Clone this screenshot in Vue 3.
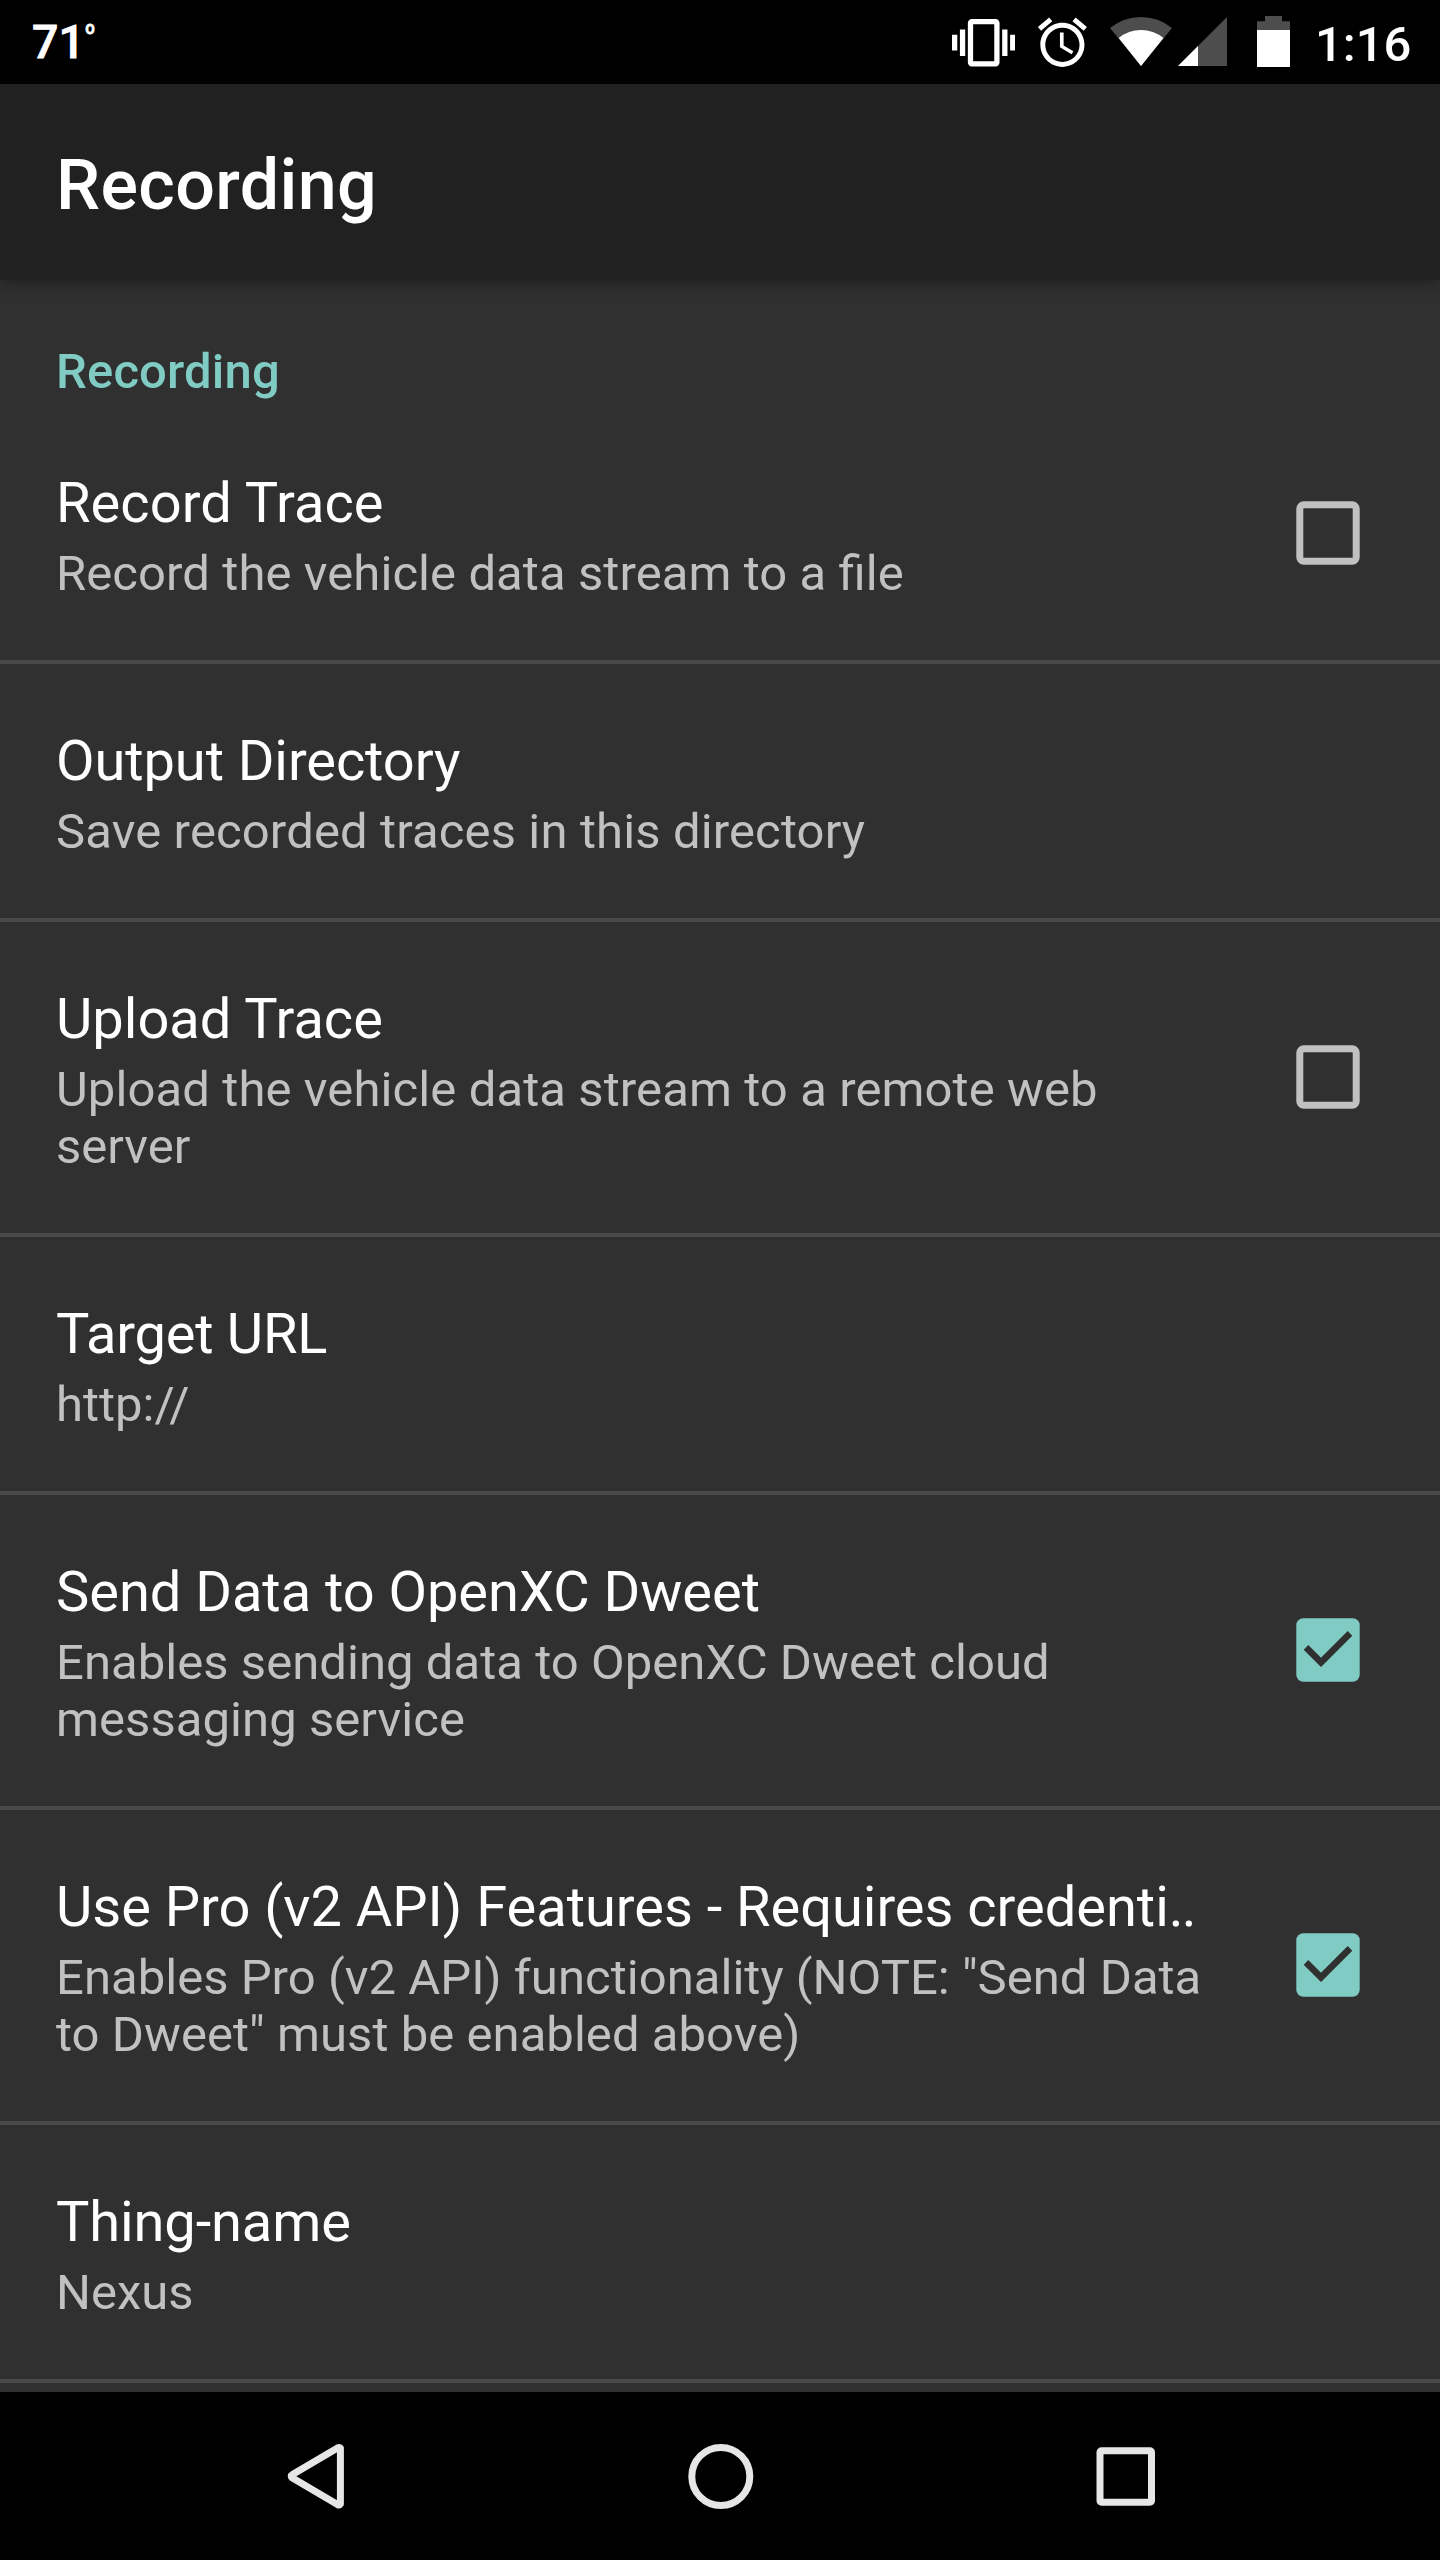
<script setup>
// `track` values are letter spacing in px, for the title and for each summary line
const settings = [
  { title: 'Record Trace', track: 0.05, summary: [{ text: 'Record the vehicle data stream to a file', track: 0.08 }], checked: false },
  { title: 'Output Directory', track: -0.08, summary: [{ text: 'Save recorded traces in this directory', track: 0.13 }] },
  { title: 'Upload Trace', track: 0, summary: [{ text: 'Upload the vehicle data stream to a remote web', track: 0.1 }, { text: 'server', track: 0 }], checked: false },
  { title: 'Target URL', track: -0.25, summary: [{ text: 'http://', track: 0 }] },
  { title: 'Send Data to OpenXC Dweet', track: -0.03, summary: [{ text: 'Enables sending data to OpenXC Dweet cloud', track: 0.05 }, { text: 'messaging service', track: 0.06 }], checked: true },
  { title: 'Use Pro (v2 API) Features - Requires credenti', dots: '..', track: -0.02, summary: [{ text: 'Enables Pro (v2 API) functionality (NOTE: "Send Data', track: 0.03 }, { text: 'to Dweet" must be enabled above)', track: 0.05 }], checked: true },
  { title: 'Thing-name', track: -0.12, summary: [{ text: 'Nexus', track: 0 }] },
]
</script>

<template>
  <div class="screen">
    <header class="status">
      <div class="temp">71<span class="degree">º</span></div>
      <div class="tray">
        <svg class="vibrate" viewBox="0 0 24 24" fill="#fff">
          <path d="M0 15h2V9H0v6zm3 2h2V7H3v10zm19-8v6h2V9h-2zm-3 8h2V7h-2v10zM16.5 3h-9C6.67 3 6 3.67 6 4.5v15c0 .83.67 1.5 1.5 1.5h9c.83 0 1.5-.67 1.5-1.5v-15c0-.83-.67-1.5-1.5-1.5zM16 19H8V5h8v14z" />
        </svg>
        <svg class="alarm" viewBox="0 0 24 24" fill="#fff">
          <path d="M22 5.72l-4.6-3.86-1.29 1.53 4.6 3.86L22 5.72zM7.88 3.39L6.6 1.86 2 5.71l1.29 1.53 4.59-3.85zM12.5 8H11v6l4.75 2.85.75-1.23-4-2.37V8zM12 4c-4.97 0-9 4.03-9 9s4.02 9 9 9c4.97 0 9-4.03 9-9s-4.03-9-9-9zm0 16c-3.87 0-7-3.13-7-7s3.13-7 7-7 7 3.13 7 7-3.13 7-7 7z" />
        </svg>
        <svg class="wifi" viewBox="0 0 62 49">
          <path d="M31 49L0 11Q14 0 31 0T62 11Z" fill="#4d4d4d" />
          <path d="M31 49L8.700 21Q18.500 13 31 13T53.500 21Z" fill="#fff" />
        </svg>
        <svg class="signal" viewBox="0 0 49 49">
          <path d="M0 49L49 0V49Z" fill="#4d4d4d" />
          <path d="M0 49L20 29V49Z" fill="#fff" />
        </svg>
        <svg class="battery" viewBox="0 0 33 51">
          <path d="M0 5.300H8V0H25V5.300H33V14H0Z" fill="#4d4d4d" />
          <path d="M0 14H33V51H0Z" fill="#fff" />
        </svg>
        <span class="clock">1:16</span>
      </div>
    </header>

    <div class="appbar"><h1>Recording</h1></div>

    <main class="list">
      <h2>Recording</h2>
      <section v-for="item in settings" :key="item.title" class="row">
        <div class="copy">
          <div class="title" :style="{ letterSpacing: item.track + 'px' }">{{ item.title }}<span v-if="item.dots" class="dots">{{ item.dots }}</span></div>
          <div v-for="line in item.summary" :key="line.text" class="summary" :style="{ letterSpacing: line.track + 'px' }">{{ line.text }}</div>
        </div>
        <svg v-if="item.checked !== undefined" class="check" viewBox="0 0 64 64">
          <template v-if="item.checked">
            <rect x=".3" y=".3" width="63.400" height="63.400" rx="7" fill="#80cbc4" />
            <path d="M7.700 31.700L12.300 27L25 39.700L51.700 13L56.300 17.700L25 49Z" fill="#303030" />
          </template>
          <rect v-else x="3.800" y="3.800" width="56.400" height="56.400" rx="4" fill="none" stroke="#c1c1c1" stroke-width="7" />
        </svg>
      </section>
    </main>

    <nav class="nav">
      <svg viewBox="0 0 66 66" fill="none" stroke="#e6e6e6" stroke-width="7" stroke-linejoin="round">
        <path d="M57.400 5L57.400 61Q56.500 62.500 54.500 61.500L9.500 35Q7 33 9.500 31.500L54.500 5Q56.500 4 57.400 5Z" />
      </svg>
      <svg viewBox="0 0 66 66" fill="none" stroke="#e6e6e6" stroke-width="7">
        <circle cx="32.800" cy="33.400" r="29" />
      </svg>
      <svg viewBox="0 0 66 66" fill="none" stroke="#e6e6e6" stroke-width="7">
        <rect x="7" y="7.800" width="51.500" height="51.500" rx="1.500" />
      </svg>
    </nav>
  </div>
</template>

<style>
body {
  margin: 0;
  background: #000;
}
</style>

<style scoped>
.screen {
  width: 1440px;
  height: 2560px;
  display: flex;
  flex-direction: column;
  overflow: hidden;
  background: #303030;
  color: #fff;
  font-family: Roboto, "Noto Sans", sans-serif;
}
.status {
  height: 84px;
  flex: none;
  box-sizing: border-box;
  padding: 0 29px 0 32px;
  display: flex;
  justify-content: space-between;
  background: #000;
  font-weight: 500;
  white-space: nowrap;
}
.temp {
  display: flex;
  font-size: 46.500px;
  line-height: 84px;
  -webkit-text-stroke: 0.8px #fff;
}
.degree {
  margin: 18px 0 0 -1px;
  font-size: 27px;
  line-height: 32px;
  transform: scaleX(0.9);
}
.tray {
  display: flex;
  align-items: flex-start;
}
.tray svg {
  flex: none;
}
.vibrate {
  width: 63.400px;
  height: 63.400px;
  margin-top: 11.200px;
}
.alarm {
  width: 58.800px;
  height: 58.800px;
  margin: 13px 0 0 17.500px;
}
.wifi {
  width: 62px;
  height: 49px;
  margin: 17px 0 0 18.500px;
}
.signal {
  width: 49px;
  height: 49px;
  margin: 17px 0 0 6px;
}
.battery {
  width: 33px;
  height: 51px;
  margin: 16px 0 0 30px;
}
.clock {
  width: 96px;
  margin-left: 25px;
  font-size: 49px;
  line-height: 89px;
}
.appbar {
  position: relative;
  z-index: 1;
  height: 196px;
  flex: none;
  box-sizing: border-box;
  padding-left: 56px;
  background: #212121;
  box-shadow: 0 4px 14px rgba(0, 0, 0, 0.32);
}
h1 {
  margin: 0;
  font-size: 70px;
  line-height: 202px;
  font-weight: 500;
  letter-spacing: 0.35px;
}
.list {
  height: 2112px;
  flex: none;
  overflow: hidden;
}
h2 {
  margin: 0;
  height: 126px;
  padding-left: 56px;
  font-size: 49px;
  line-height: 183px;
  font-weight: 500;
  letter-spacing: 0.15px;
  color: #80cbc4;
}
.row {
  box-sizing: border-box;
  padding: 64px 80px 58px 56px;
  display: flex;
  align-items: center;
  justify-content: space-between;
  border-bottom: 4px solid #4a4a4a;
}
.copy {
  white-space: nowrap;
  font-feature-settings: "liga" 1;
}
.title {
  height: 75px;
  font-size: 56px;
  line-height: 66px;
}
.dots {
  letter-spacing: -1.700px;
}
.summary {
  height: 57px;
  font-size: 49px;
  line-height: 57px;
  color: #c1c1c1;
}
.check {
  width: 64px;
  height: 64px;
  flex: none;
  margin: 0 0 7px;
}
.nav {
  height: 168px;
  flex: none;
  box-sizing: border-box;
  padding: 0 112px 0 113px;
  display: grid;
  grid-template-columns: repeat(3, 1fr);
  place-items: center;
  background: #000;
}
.nav svg {
  width: 66px;
  height: 66px;
}
</style>
